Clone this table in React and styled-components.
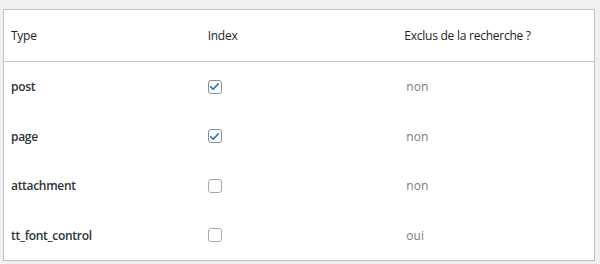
import React from 'react'
import styled, { createGlobalStyle } from 'styled-components'

const GlobalStyle = createGlobalStyle`
body {
  margin: 0;
  background: #f0f0f1;
  font-family: "Open Sans", "Noto Sans", sans-serif;
}
`

const rows = [
    { type: 'post', indexed: true, excluded: 'non' },
    { type: 'page', indexed: true, excluded: 'non' },
    { type: 'attachment', indexed: false, excluded: 'non' },
    { type: 'tt_font_control', indexed: false, excluded: 'oui' },
]

function Checkbox({ checked }) {
    return (
        <Box checked={checked}>
            {checked && (
                <svg width="11" height="11" viewBox="0 0 20 20">
                    <path d="M3 10.5l4.5 4.5L17 5" fill="none" stroke="#2271b1" strokeWidth="3" strokeLinecap="round" strokeLinejoin="round" />
                </svg>
            )}
        </Box>
    )
}

function App() {
    return (
        <>
            <GlobalStyle />
            <Card>
                <HeadRow>
                    <HeadCell>Type</HeadCell>
                    <HeadCell>Index</HeadCell>
                    <HeadCell>Exclus de la recherche ?</HeadCell>
                </HeadRow>
                {rows.map(r => (
                    <Row key={r.type}>
                        <TypeCell>{r.type}</TypeCell>
                        <Cell><Checkbox checked={r.indexed} /></Cell>
                        <MutedCell>{r.excluded}</MutedCell>
                    </Row>
                ))}
            </Card>
        </>
    )
}

export default App

const Card = styled.div`
margin:9px 0 0 3px;
width:590px;
background:#fff;
border:1px solid #c3c4c7;
box-shadow:0 1px 1px rgba(0,0,0,0.04);
`

const HeadRow = styled.div`
display:grid;
grid-template-columns:1fr 1fr 1fr;
height:51px;
align-items:center;
border-bottom:1px solid #c3c4c7;
`

const Row = styled.div`
display:grid;
grid-template-columns:1fr 1fr 1fr;
height:49.5px;
align-items:center;
`

const Cell = styled.div`
padding:0 7px;
display:flex;
align-items:center;
`

const HeadCell = styled(Cell)`
font-size:12px;
letter-spacing:-0.25px;
color:#1d2327;
`

const TypeCell = styled(Cell)`
font-size:12px;
font-weight:600;
letter-spacing:-0.3px;
color:#2c3338;
`

const MutedCell = styled(Cell)`
font-size:12px;
color:#787c82;
padding-left:9px;
`

const Box = styled.span`
width:12px;
height:12px;
border:1px solid ${p => p.checked ? '#8c8f94' : '#a7aaad'};
border-radius:3px;
background:#fff;
display:flex;
align-items:center;
justify-content:center;
`
